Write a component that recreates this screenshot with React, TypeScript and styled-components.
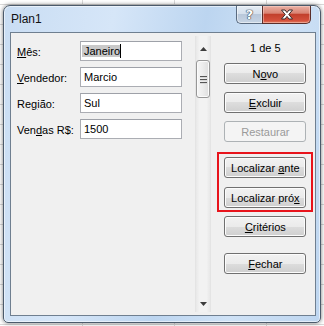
import styled, { createGlobalStyle } from "styled-components";

const FIELDS = [
  { key: "mes", before: "", mark: "M", after: "ês:", value: "Janeiro", selected: true },
  { key: "vend", before: "", mark: "V", after: "endedor:", value: "Marcio", selected: false },
  { key: "reg", before: "Re", mark: "g", after: "ião:", value: "Sul", selected: false },
  { key: "vendas", before: "Ven", mark: "d", after: "as R$:", value: "1500", selected: false },
];

const GlobalStyle = createGlobalStyle`
  html, body {
    margin: 0;
    padding: 0;
  }
  body {
    width: 324px;
    height: 326px;
    overflow: hidden;
    background-color: #ffffff;
    background-image:
      linear-gradient(to bottom, #d9d9d9 1px, transparent 1px),
      linear-gradient(to right, #d9d9d9 1px, transparent 1px);
    background-size: 100% 20px, 92px 100%;
    background-position: 0 4px, 82px 0;
    font-family: "Liberation Sans", Arial, sans-serif;
    font-size: 11px;
    color: #000;
  }
`;

const Mnemonic = ({ before = "", mark, after = "" }: { before?: string; mark: string; after?: string }) => (
  <Caption>
    {before}
    <u>{mark}</u>
    {after}
  </Caption>
);

const App = () => {
  return (
    <>
      <GlobalStyle />
      <Window>
        <TitleBar>
          <Title>Plan1</Title>
          <HelpBtn>?</HelpBtn>
          <CloseBtn>
            <svg width="14" height="11" viewBox="0 0 14 11">
              <path
                d="M1.5 1 H5 L7 3.6 L9 1 H12.5 L8.8 5.5 L12.5 10 H9 L7 7.4 L5 10 H1.5 L5.2 5.5 Z"
                fill="#ffffff"
                stroke="#3a2a2a"
                strokeWidth="1"
                strokeLinejoin="round"
              />
            </svg>
          </CloseBtn>
        </TitleBar>
        <Client>
          <Form>
            {FIELDS.map((f) => (
              <Row key={f.key}>
                <Label>
                  <Mnemonic before={f.before} mark={f.mark} after={f.after} />
                </Label>
                <Field>
                  <Value selected={f.selected}>{f.value}</Value>
                  {f.selected && <Caret />}
                </Field>
              </Row>
            ))}
          </Form>
          <ScrollBar>
            <ArrowBox>
              <svg width="7" height="4" viewBox="0 0 7 4">
                <path d="M3.5 0 L7 4 H0 Z" fill="#3c3c3c" />
              </svg>
            </ArrowBox>
            <Thumb>
              <Grip />
              <Grip />
              <Grip />
            </Thumb>
            <Track />
            <ArrowBox bottom>
              <svg width="7" height="4" viewBox="0 0 7 4">
                <path d="M0 0 H7 L3.5 4 Z" fill="#3c3c3c" />
              </svg>
            </ArrowBox>
          </ScrollBar>
          <Actions>
            <Counter>1 de 5</Counter>
            <Btn gap={8}>
              <Mnemonic before="N" mark="o" after="vo" />
            </Btn>
            <Btn gap={8}>
              <Mnemonic mark="E" after="xcluir" />
            </Btn>
            <Btn gap={8} disabled>
              <Caption>Restaurar</Caption>
            </Btn>
            <Highlight>
              <Btn gap={0}>
                <Mnemonic before="Localizar " mark="a" after="nte" />
              </Btn>
              <Btn gap={9}>
                <Mnemonic before="Localizar pró" mark="x" />
              </Btn>
            </Highlight>
            <Btn gap={4}>
              <Mnemonic mark="C" after="ritérios" />
            </Btn>
            <Btn gap={16}>
              <Mnemonic mark="F" after="echar" />
            </Btn>
          </Actions>
        </Client>
      </Window>
    </>
  );
};

export default App;

const Caption = styled.span`
  white-space: pre;

  u {
    text-underline-offset: 1px;
  }
`;

const Window = styled.div`
  box-sizing: border-box;
  margin: 5px 0 0 3px;
  width: 318px;
  height: 318px;
  padding: 0 4px 6px 6px;
  display: flex;
  flex-direction: column;
  border: 1px solid #4b5a6b;
  border-radius: 7px 7px 5px 5px;
  background: linear-gradient(
    100deg,
    #c9ddf3 0%,
    #d6e6f8 30%,
    #bcd5f0 55%,
    #cfe2f6 75%,
    #bed6f0 100%
  );
  box-shadow: 0 0 4px rgba(0, 0, 0, 0.55), inset 0 0 0 1px rgba(255, 255, 255, 0.55);
`;

const TitleBar = styled.div`
  height: 26px;
  display: flex;
  align-items: flex-start;
`;

const Title = styled.div`
  align-self: center;
  margin-left: 1px;
  font-size: 12px;
  color: #111;
`;

const HelpBtn = styled.div`
  box-sizing: border-box;
  margin-left: auto;
  width: 26px;
  height: 18px;
  display: flex;
  align-items: center;
  justify-content: center;
  border: 1px solid #5a6b80;
  border-top: 0;
  border-right: 0;
  border-radius: 0 0 0 5px;
  background: linear-gradient(#e4ecf5 0%, #d5e0ec 45%, #b9c8da 50%, #c6d4e4 100%);
  box-shadow: inset 0 0 0 1px rgba(255, 255, 255, 0.5);
  font-family: "DejaVu Sans", sans-serif;
  font-size: 13px;
  font-weight: bold;
  color: #fff;
  text-shadow: 0 0 1px #2e3a48, 0 0 1px #2e3a48, 0 0 1px #2e3a48;
`;

const CloseBtn = styled.div`
  box-sizing: border-box;
  margin-right: 5px;
  width: 49px;
  height: 18px;
  display: flex;
  align-items: center;
  justify-content: center;
  border: 1px solid #5a2e2a;
  border-top: 0;
  border-radius: 0 0 5px 0;
  background: linear-gradient(#eab0a4 0%, #d98474 42%, #c2402d 50%, #d4503c 85%, #e07a5e 100%);
  box-shadow: inset 0 0 0 1px rgba(255, 220, 210, 0.45);
`;

const Client = styled.div`
  flex: 1;
  display: flex;
  align-items: flex-start;
  border: 1px solid #6f7f90;
  background: #f0f0f0;
`;

const Form = styled.div`
  width: 165px;
  padding: 8px 0 0 6px;
  display: flex;
  flex-direction: column;
  gap: 6px;
`;

const Row = styled.div`
  display: flex;
  align-items: center;
  height: 20px;
`;

const Label = styled.div`
  width: 63px;
  white-space: nowrap;
  padding-top: 2px;
`;

const Field = styled.div`
  box-sizing: border-box;
  width: 102px;
  height: 20px;
  display: flex;
  align-items: center;
  padding-left: 1px;
  border: 1px solid #abadb3;
  border-top-color: #9ea1a8;
  background: #fff;
`;

const Value = styled.span<{ selected: boolean }>`
  display: inline-block;
  line-height: 12px;
  padding: 0 0 0 2px;
  background: ${(p) => (p.selected ? "#c9c9c9" : "transparent")};
  color: #000;
`;

const Caret = styled.span`
  display: inline-block;
  width: 1px;
  height: 14px;
  background: #000;
`;

const ScrollBar = styled.div`
  box-sizing: border-box;
  margin: 3px 0 0 13px;
  width: 17px;
  height: 276px;
  display: flex;
  flex-direction: column;
  border-left: 1px solid #e4e4e4;
  border-right: 1px solid #e4e4e4;
  background: linear-gradient(to right, #e8e8e8, #f2f2f2 25%, #f2f2f2 75%, #e8e8e8);
`;

const ArrowBox = styled.div<{ bottom?: boolean }>`
  height: 23px;
  display: flex;
  justify-content: center;
  align-items: ${(p) => (p.bottom ? "flex-start" : "flex-end")};
  padding: ${(p) => (p.bottom ? "13px 0 0" : "0 0 8px")};
  box-sizing: border-box;
  svg {
    display: block;
  }
`;

const Thumb = styled.div`
  box-sizing: border-box;
  height: 38px;
  margin: 1px 0 0 0;
  display: flex;
  flex-direction: column;
  align-items: center;
  justify-content: center;
  gap: 2px;
  border: 1px solid #979797;
  border-radius: 3px;
  background: linear-gradient(to right, #f6f6f6, #ececec 50%, #dedede 100%);
  box-shadow: inset 0 0 0 1px #fbfbfb;
`;

const Grip = styled.div`
  width: 7px;
  height: 1px;
  background: #555;
  box-shadow: 0 1px 0 #d8d8d8;
`;

const Track = styled.div`
  flex: 1;
`;

const Actions = styled.div`
  width: 102px;
  padding-left: 6px;
  display: flex;
  flex-direction: column;
  align-items: flex-start;
`;

const Counter = styled.div`
  margin: 8px 0 0 7px;
  width: 82px;
  height: 14px;
  line-height: 14px;
  text-align: center;
`;

const Btn = styled.div<{ gap: number; disabled?: boolean }>`
  box-sizing: border-box;
  margin: ${(p) => p.gap}px 0 0 7px;
  width: 82px;
  height: 21px;
  display: flex;
  align-items: center;
  justify-content: center;
  border: 1px solid ${(p) => (p.disabled ? "#adb2b5" : "#707070")};
  border-radius: 3px;
  background: ${(p) =>
    p.disabled
      ? "#f4f4f4"
      : "linear-gradient(#f2f2f2 0%, #ebebeb 50%, #dddddd 50%, #cfcfcf 100%)"};
  box-shadow: inset 0 0 0 1px ${(p) => (p.disabled ? "#f4f4f4" : "#fcfcfc")};
  color: ${(p) => (p.disabled ? "#9a9a9a" : "#000")};
`;

const Highlight = styled.div`
  box-sizing: border-box;
  margin-top: 10px;
  width: 96px;
  height: 60px;
  padding-top: 3px;
  display: flex;
  flex-direction: column;
  border: 2px solid #e8141c;

  ${Btn} {
    margin-left: 5px;
  }
`;
